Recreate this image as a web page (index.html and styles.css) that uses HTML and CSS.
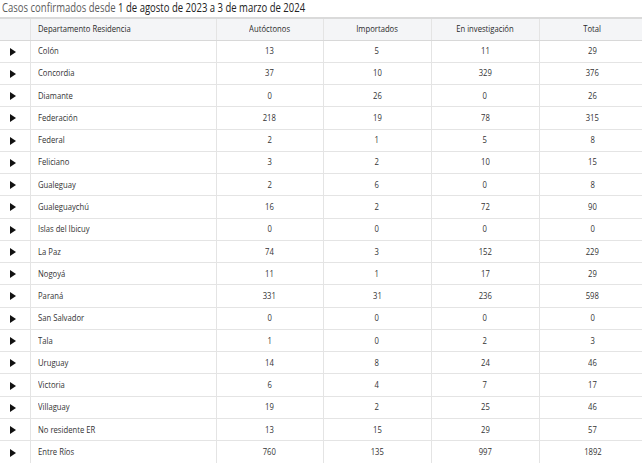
FILE: index.html
```html
<!DOCTYPE html>
<html lang="es">
<head>
<meta charset="utf-8">
<link rel="stylesheet" href="styles.css">
</head>
<body>
<div class="page">
  <div class="title"><span class="sq-l"><span class="muted">Casos confirmados desde</span> 1 de agosto de 2023 a 3 de marzo de 2024</span></div>
  <table class="grid">
    <colgroup>
      <col class="c-arrow"><col class="c-dep"><col class="c-a"><col class="c-b"><col class="c-c"><col class="c-d">
    </colgroup>
    <thead>
      <tr><th></th><th class="left"><span class="sq-l">Departamento Residencia</span></th><th><span class="sq">Autóctonos</span></th><th><span class="sq">Importados</span></th><th><span class="sq">En investigación</span></th><th><span class="sq">Total</span></th></tr>
    </thead>
    <tbody>
      <tr><td><span class="tri"></span></td><td class="left"><span class="sq-l">Colón</span></td><td><span class="sq">13</span></td><td><span class="sq">5</span></td><td><span class="sq">11</span></td><td><span class="sq">29</span></td></tr>
      <tr><td><span class="tri"></span></td><td class="left"><span class="sq-l">Concordia</span></td><td><span class="sq">37</span></td><td><span class="sq">10</span></td><td><span class="sq">329</span></td><td><span class="sq">376</span></td></tr>
      <tr><td><span class="tri"></span></td><td class="left"><span class="sq-l">Diamante</span></td><td><span class="sq">0</span></td><td><span class="sq">26</span></td><td><span class="sq">0</span></td><td><span class="sq">26</span></td></tr>
      <tr><td><span class="tri"></span></td><td class="left"><span class="sq-l">Federación</span></td><td><span class="sq">218</span></td><td><span class="sq">19</span></td><td><span class="sq">78</span></td><td><span class="sq">315</span></td></tr>
      <tr><td><span class="tri"></span></td><td class="left"><span class="sq-l">Federal</span></td><td><span class="sq">2</span></td><td><span class="sq">1</span></td><td><span class="sq">5</span></td><td><span class="sq">8</span></td></tr>
      <tr><td><span class="tri"></span></td><td class="left"><span class="sq-l">Feliciano</span></td><td><span class="sq">3</span></td><td><span class="sq">2</span></td><td><span class="sq">10</span></td><td><span class="sq">15</span></td></tr>
      <tr><td><span class="tri"></span></td><td class="left"><span class="sq-l">Gualeguay</span></td><td><span class="sq">2</span></td><td><span class="sq">6</span></td><td><span class="sq">0</span></td><td><span class="sq">8</span></td></tr>
      <tr><td><span class="tri"></span></td><td class="left"><span class="sq-l">Gualeguaychú</span></td><td><span class="sq">16</span></td><td><span class="sq">2</span></td><td><span class="sq">72</span></td><td><span class="sq">90</span></td></tr>
      <tr><td><span class="tri"></span></td><td class="left"><span class="sq-l">Islas del Ibicuy</span></td><td><span class="sq">0</span></td><td><span class="sq">0</span></td><td><span class="sq">0</span></td><td><span class="sq">0</span></td></tr>
      <tr><td><span class="tri"></span></td><td class="left"><span class="sq-l">La Paz</span></td><td><span class="sq">74</span></td><td><span class="sq">3</span></td><td><span class="sq">152</span></td><td><span class="sq">229</span></td></tr>
      <tr><td><span class="tri"></span></td><td class="left"><span class="sq-l">Nogoyá</span></td><td><span class="sq">11</span></td><td><span class="sq">1</span></td><td><span class="sq">17</span></td><td><span class="sq">29</span></td></tr>
      <tr><td><span class="tri"></span></td><td class="left"><span class="sq-l">Paraná</span></td><td><span class="sq">331</span></td><td><span class="sq">31</span></td><td><span class="sq">236</span></td><td><span class="sq">598</span></td></tr>
      <tr><td><span class="tri"></span></td><td class="left"><span class="sq-l">San Salvador</span></td><td><span class="sq">0</span></td><td><span class="sq">0</span></td><td><span class="sq">0</span></td><td><span class="sq">0</span></td></tr>
      <tr><td><span class="tri"></span></td><td class="left"><span class="sq-l">Tala</span></td><td><span class="sq">1</span></td><td><span class="sq">0</span></td><td><span class="sq">2</span></td><td><span class="sq">3</span></td></tr>
      <tr><td><span class="tri"></span></td><td class="left"><span class="sq-l">Uruguay</span></td><td><span class="sq">14</span></td><td><span class="sq">8</span></td><td><span class="sq">24</span></td><td><span class="sq">46</span></td></tr>
      <tr><td><span class="tri"></span></td><td class="left"><span class="sq-l">Victoria</span></td><td><span class="sq">6</span></td><td><span class="sq">4</span></td><td><span class="sq">7</span></td><td><span class="sq">17</span></td></tr>
      <tr><td><span class="tri"></span></td><td class="left"><span class="sq-l">Villaguay</span></td><td><span class="sq">19</span></td><td><span class="sq">2</span></td><td><span class="sq">25</span></td><td><span class="sq">46</span></td></tr>
      <tr><td><span class="tri"></span></td><td class="left"><span class="sq-l">No residente ER</span></td><td><span class="sq">13</span></td><td><span class="sq">15</span></td><td><span class="sq">29</span></td><td><span class="sq">57</span></td></tr>
      <tr class="last"><td><span class="tri"></span></td><td class="left"><span class="sq-l">Entre Ríos</span></td><td><span class="sq">760</span></td><td><span class="sq">135</span></td><td><span class="sq">997</span></td><td><span class="sq">1892</span></td></tr>
    </tbody>
  </table>
</div>
</body>
</html>
```

FILE: styles.css
```css
html, body {
  margin: 0;
  padding: 0;
  background: #ffffff;
  overflow: hidden;
}
.page {
  width: 646px;
  font-family: "Open Sans", "Noto Sans", sans-serif;
  color: #333;
}
.sq, .sq-l {
  display: inline-block;
  transform: scaleX(0.8);
  transform-origin: center;
}
.sq-l {
  transform-origin: left center;
}
.title {
  font-size: 11.9px;
  line-height: 15px;
  padding: 0 0 0 2px;
  height: 17px;
  color: #222;
  white-space: nowrap;
}
.title .muted {
  color: #5c5c5c;
}
.grid {
  border-collapse: collapse;
  table-layout: fixed;
  width: 646px;
  font-size: 9.6px;
}
.c-arrow { width: 30px; }
.c-dep { width: 186px; }
.c-a { width: 107px; }
.c-b { width: 108px; }
.c-c { width: 108px; }
.c-d { width: 107px; }
.grid th, .grid td {
  border: 1px solid #e4e4e4;
  text-align: center;
  padding: 0 7px;
  height: 22.28px;
  box-sizing: border-box;
  line-height: 12px;
  white-space: nowrap;
}
.grid th {
  background: #f4f5f7;
  font-weight: 400;
  color: #2a2a2a;
  height: 22px;
  border-top: 2px solid #dadada;
  border-bottom: 1px solid #d8d8d8;
}
.grid th:first-child, .grid td:first-child {
  border-left: none;
}
.grid .last td {
  border-bottom: none;
}
.grid .left {
  text-align: left;
}
.tri {
  display: inline-block;
  width: 0;
  height: 0;
  border-top: 4px solid transparent;
  border-bottom: 4px solid transparent;
  border-left: 6px solid #111;
  vertical-align: middle;
  margin-left: -3px;
}
```
